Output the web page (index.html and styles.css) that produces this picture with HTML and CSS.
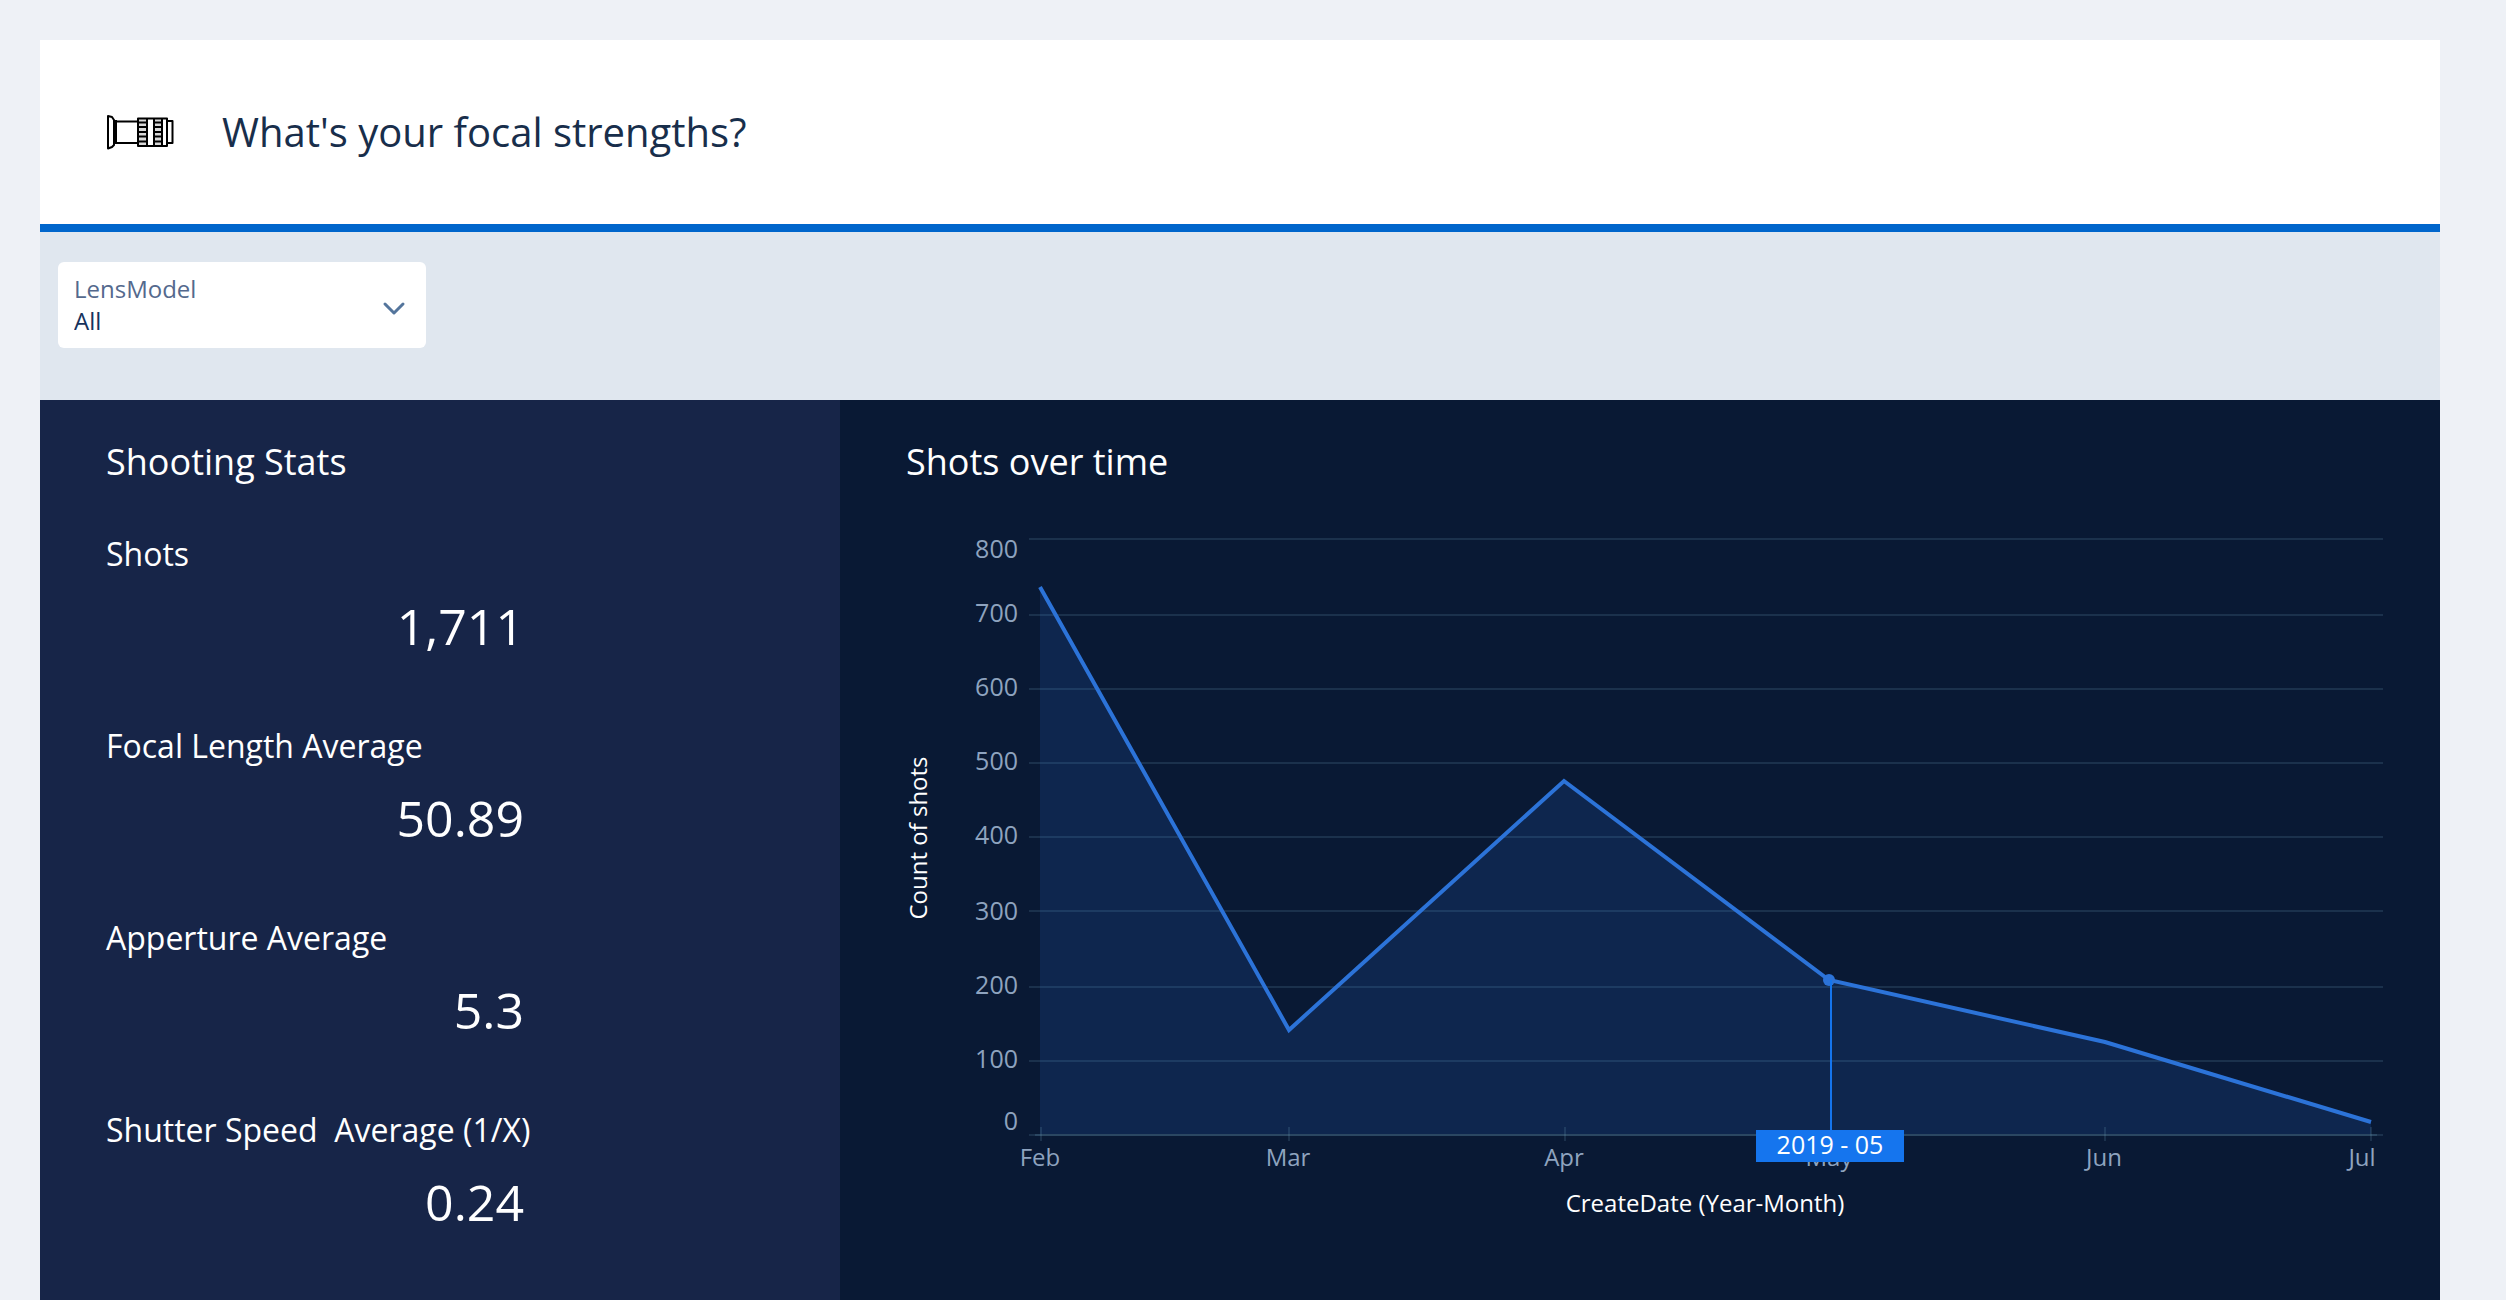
FILE: index.html
```
<!DOCTYPE html>
<html lang="en">
<head>
<meta charset="utf-8">
<meta name="viewport" content="width=device-width, initial-scale=1">
<title>What's your focal strengths?</title>
<link rel="stylesheet" href="styles.css">
</head>
<body>
<main class="dashboard">
  <header class="header">
    <svg class="lens-icon" viewBox="0 0 68 36" aria-hidden="true">
      <path fill="#d8d8d8" d="M32 4H41V32H32ZM48 4H56V32H48Z"/>
      <g fill="none" stroke="#000" stroke-width="2" stroke-linejoin="round">
        <path d="M2 2 6 3 8 6V31L6 33 2 34.500Z"/>
        <path d="M10 6V30M8 7.500H32M8 29H32"/>
        <path d="M32 4.500H61V32H32ZM61 7H66.500V29H61"/>
        <path d="M41 4V32M48 4V32M56 4V32"/>
        <path d="M32 8.500H41M32 13H41M32 18H41M32 22.500H41M32 27.500H41M48 8.500H56M48 13H56M48 18H56M48 22.500H56M48 27.500H56"/>
      </g>
    </svg>
    <h1 class="header-title">What's your focal strengths?</h1>
  </header>

  <section class="filters" aria-label="Filters">
    <div class="filter">
      <label class="filter-label" for="lens-model">LensModel</label>
      <select class="filter-select" id="lens-model">
        <option>All</option>
      </select>
      <svg class="filter-chevron" viewBox="0 0 24 30" aria-hidden="true">
        <path d="M3 14 12 23 21 14" fill="none" stroke="#54759c" stroke-width="3" stroke-linecap="round" stroke-linejoin="round"/>
      </svg>
    </div>
  </section>

  <div class="panels">
    <section class="panel stats">
      <h2 class="panel-title">Shooting Stats</h2>
      <dl class="stat-list">
        <div class="stat"><dt>Shots</dt><dd>1,711</dd></div>
        <div class="stat"><dt>Focal Length Average</dt><dd>50.89</dd></div>
        <div class="stat"><dt>Apperture Average</dt><dd>5.3</dd></div>
        <div class="stat"><dt>Shutter Speed&nbsp; Average (1/X)</dt><dd>0.24</dd></div>
      </dl>
    </section>

    <section class="panel trend">
      <h2 class="panel-title">Shots over time</h2>
      <svg class="chart" viewBox="0 0 1600 760" role="img" aria-label="Count of shots by month">
        <path class="grid" d="M189 39H1543M189 115H1543M189 189H1543M189 263H1543M189 337H1543M189 411H1543M189 487H1543M189 561H1543M189 635H1543"/>
        <path class="area" d="M200 88 449 530 724 281 989 480 1265 542 1531 622V634H200Z"/>
        <path class="axis" d="M195 635H1537"/>
        <path class="grid" d="M201 627V641M449 627V641M725 627V641M1265 627V641M1531 627V641"/>
        <path class="line" d="M200 87 449 530 724 281 989 480 1265 542 1531 622"/>
        <circle class="marker" cx="989" cy="480" r="6"/>
        <path class="cursor" d="M991 480V632"/>
        <g class="tick tick-y">
          <text x="178" y="58">800</text>
          <text x="178" y="122">700</text>
          <text x="178" y="196">600</text>
          <text x="178" y="270">500</text>
          <text x="178" y="344">400</text>
          <text x="178" y="420">300</text>
          <text x="178" y="494">200</text>
          <text x="178" y="568">100</text>
          <text x="178" y="630">0</text>
        </g>
        <g class="tick">
          <text x="200" y="666">Feb</text>
          <text x="448" y="666">Mar</text>
          <text x="724" y="666">Apr</text>
          <text x="989" y="666">May</text>
          <text x="1264" y="666">Jun</text>
          <text x="1522" y="666">Jul</text>
        </g>
        <rect class="tip" x="916" y="630" width="148" height="32"/>
        <text class="tip-text" x="990" y="654">2019 - 05</text>
        <text class="axis-title" x="865" y="712">CreateDate (Year-Month)</text>
        <text class="axis-title" transform="translate(87 338) rotate(-90)">Count of shots</text>
      </svg>
    </section>
  </div>
</main>
</body>
</html>
```
FILE: styles.css
```
* {
  box-sizing: border-box;
  margin: 0;
}

body {
  background: #eef1f6;
  font-family: "Open Sans", "Noto Sans", sans-serif;
  font-weight: 400;
}

.dashboard {
  display: flex;
  flex-direction: column;
  min-height: 100vh;
  padding: 40px 66px 0 40px;
}

.header {
  display: flex;
  align-items: center;
  gap: 48px;
  padding: 68px 66px;
  background: #fff;
  border-bottom: 8px solid #0066cc;
}

.lens-icon {
  flex: none;
  width: 68px;
  height: 36px;
}

.header-title {
  color: #182e4b;
  font-size: 40px;
  line-height: 48px;
  font-weight: inherit;
}

.filters {
  padding: 30px 18px 52px;
  background: #e0e7ef;
}

.filter {
  display: grid;
  grid-template-columns: 1fr 24px;
  align-items: center;
  width: 368px;
  padding: 11px 20px 11px 16px;
  background: #fff;
  border-radius: 6px;
}

.filter-label,
.filter-select {
  grid-column: 1;
  font-size: 24px;
  line-height: 32px;
}

.filter-label {
  color: #54698d;
}

.filter-select {
  appearance: none;
  height: 32px;
  padding: 0;
  border: 0;
  background: none;
  color: #16325c;
  font-family: inherit;
  font-weight: inherit;
}

.filter-chevron {
  grid-column: 2;
  grid-row: 1 / 3;
  width: 24px;
  height: 30px;
}

.panels {
  display: grid;
  grid-template-columns: 1fr 2fr;
  flex: 1;
  color: #fff;
}

.panel {
  padding-top: 38px;
}

.panel-title {
  padding: 0 66px;
  font-size: 36px;
  line-height: 48px;
  font-weight: inherit;
}

.stats {
  background: #172548;
}

.trend {
  background: #091934;
}

.stat-list {
  display: grid;
  gap: 68px;
  padding: 48px 66px 60px;
}

.stat {
  display: grid;
  gap: 20px;
}

.stat dt {
  font-size: 32px;
  line-height: 40px;
}

.stat dd {
  max-width: 418px;
  font-size: 50px;
  line-height: 64px;
  text-align: right;
}

.chart {
  display: block;
  width: 100%;
  margin-top: 14px;
  font-size: 24px;
}

.chart text {
  text-anchor: middle;
  fill: #fff;
}

.chart .tick text {
  fill: #8ea3bf;
}

.chart .tick-y text {
  font-size: 25px;
  text-anchor: end;
}

.chart .tip-text {
  font-size: 25px;
}

.grid,
.axis,
.line,
.cursor {
  fill: none;
  stroke-width: 2;
}

.grid {
  stroke: rgba(112, 158, 190, 0.18);
}

.axis {
  stroke: rgba(112, 158, 190, 0.2);
}

.area {
  fill: rgba(44, 115, 216, 0.16);
}

.line {
  stroke: #2c73d8;
  stroke-width: 4;
}

.marker {
  fill: #2c73d8;
}

.cursor {
  stroke: #1575ee;
}

.tip {
  fill: #1575ee;
}
```
